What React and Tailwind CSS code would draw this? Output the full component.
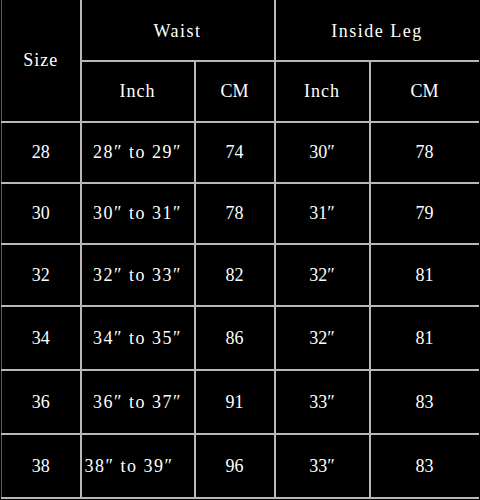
const rows = [
  { size: '28', waistIn: '28″ to 29″', waistCm: '74', legIn: '30″', legCm: '78', h: 'h-[61px]' },
  { size: '30', waistIn: '30″ to 31″', waistCm: '78', legIn: '31″', legCm: '79', h: 'h-[61px]' },
  { size: '32', waistIn: '32″ to 33″', waistCm: '82', legIn: '32″', legCm: '81', h: 'h-[62px]' },
  { size: '34', waistIn: '34″ to 35″', waistCm: '86', legIn: '32″', legCm: '81', h: 'h-[64px]' },
  { size: '36', waistIn: '36″ to 37″', waistCm: '91', legIn: '33″', legCm: '83', h: 'h-[64px]' },
  { size: '38', waistIn: '38″ to 39″', waistCm: '96', legIn: '33″', legCm: '83', h: 'h-[64px]', left: true },
];

const cell = 'border-2 border-[#b8b8b8] text-center align-middle p-0';

export default function App() {
  return (
    <div className="w-[480px] h-[500px] bg-black overflow-hidden pl-[1px] text-white font-['Liberation_Serif',serif] text-[18px]">
      <table className="table-fixed border-collapse w-[477px]">
        <colgroup>
          <col className="w-[79px]" />
          <col className="w-[114px]" />
          <col className="w-[80px]" />
          <col className="w-[95px]" />
          <col className="w-[109px]" />
        </colgroup>
        <thead>
          <tr className="h-[61px]">
            <th rowSpan={2} className={`${cell} border-t-0 border-l border-l-[#5a5a5a] font-normal tracking-[1px]`}>Size</th>
            <th colSpan={2} className={`${cell} border-t-0 font-normal tracking-[1.5px] pt-[3px]`}>Waist</th>
            <th colSpan={2} className={`${cell} border-t-0 border-r-0 font-normal tracking-[1.5px] pt-[3px]`}>Inside Leg</th>
          </tr>
          <tr className="h-[61px]">
            <th className={`${cell} font-normal tracking-[1px]`}>Inch</th>
            <th className={`${cell} font-normal`}>CM</th>
            <th className={`${cell} font-normal tracking-[1px]`}>Inch</th>
            <th className={`${cell} border-r-0 font-normal`}>CM</th>
          </tr>
        </thead>
        <tbody>
          {rows.map((r) => (
            <tr key={r.size} className={r.h}>
              <td className={`${cell} border-l border-l-[#5a5a5a]`}>{r.size}</td>
              <td className={`${cell} tracking-[1.5px] whitespace-nowrap ${r.left ? 'text-left pl-[3px]' : ''}`}>{r.waistIn}</td>
              <td className={cell}>{r.waistCm}</td>
              <td className={cell}>{r.legIn}</td>
              <td className={`${cell} border-r-0`}>{r.legCm}</td>
            </tr>
          ))}
        </tbody>
      </table>
    </div>
  );
}
